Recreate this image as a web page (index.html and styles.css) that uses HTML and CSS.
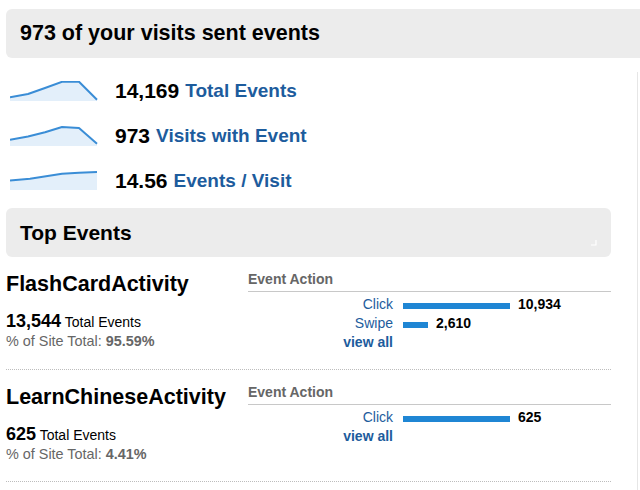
FILE: index.html
```html
<!DOCTYPE html>
<html>
<head>
<meta charset="utf-8">
<link rel="stylesheet" href="styles.css">
</head>
<body>
<div class="page">
  <div class="summary-bar">973 of your visits sent events</div>
  <div class="layout">
    <div class="main">
      <div class="metrics">
        <div class="metric">
          <svg class="spark" width="88" height="20" viewBox="0 0 88 20">
            <polygon points="0,16.2 18,13 35,7 52,0.8 69,0.8 87,18.8 87,20 0,20" fill="#e3effa"/>
            <polyline points="0,16.2 18,13 35,7 52,0.8 69,0.8 87,18.8" fill="none" stroke="#3a8dd6" stroke-width="2" stroke-linejoin="round"/>
          </svg>
          <span class="metric-value">14,169</span>
          <span class="metric-label">Total Events</span>
        </div>
        <div class="metric">
          <svg class="spark" width="88" height="20" viewBox="0 0 88 20">
            <polygon points="0,13.8 18,10.5 35,6.2 52,1 69,2 87,17.8 87,20 0,20" fill="#e3effa"/>
            <polyline points="0,13.8 18,10.5 35,6.2 52,1 69,2 87,17.8" fill="none" stroke="#3a8dd6" stroke-width="2" stroke-linejoin="round"/>
          </svg>
          <span class="metric-value">973</span>
          <span class="metric-label">Visits with Event</span>
        </div>
        <div class="metric">
          <svg class="spark" width="88" height="20" viewBox="0 0 88 20">
            <polygon points="0,9.5 20,7.8 52,2.8 69,1.8 87,1 87,19 0,19" fill="#e3effa"/>
            <polyline points="0,9.5 20,7.8 52,2.8 69,1.8 87,1" fill="none" stroke="#3a8dd6" stroke-width="2" stroke-linejoin="round"/>
          </svg>
          <span class="metric-value">14.56</span>
          <span class="metric-label">Events / Visit</span>
        </div>
      </div>

      <div class="section-bar">
        Top Events
        <svg class="grip" width="6" height="6" viewBox="0 0 6 6"><path d="M5 0 V5 H0" fill="none" stroke="#ffffff" stroke-width="1.2"/></svg>
      </div>

      <div class="event">
        <div class="event-left">
          <div class="event-name">FlashCardActivity</div>
          <div class="event-total"><b>13,544</b> Total Events</div>
          <div class="event-share">% of Site Total: <b>95.59%</b></div>
        </div>
        <div class="event-right">
          <div class="action-title">Event Action</div>
          <div class="action-row">
            <span class="action-label">Click</span>
            <span class="bar" style="width:107px"></span>
            <span class="action-value">10,934</span>
          </div>
          <div class="action-row">
            <span class="action-label">Swipe</span>
            <span class="bar" style="width:25px"></span>
            <span class="action-value">2,610</span>
          </div>
          <div class="action-row">
            <span class="action-label view-all">view all</span>
          </div>
        </div>
      </div>

      <div class="event">
        <div class="event-left">
          <div class="event-name">LearnChineseActivity</div>
          <div class="event-total"><b>625</b> Total Events</div>
          <div class="event-share">% of Site Total: <b>4.41%</b></div>
        </div>
        <div class="event-right">
          <div class="action-title">Event Action</div>
          <div class="action-row">
            <span class="action-label">Click</span>
            <span class="bar" style="width:107px"></span>
            <span class="action-value">625</span>
          </div>
          <div class="action-row">
            <span class="action-label view-all">view all</span>
          </div>
        </div>
      </div>
    </div>
    <div class="aside"></div>
  </div>
</div>
</body>
</html>
```

FILE: styles.css
```css
html, body {
  margin: 0;
  padding: 0;
  background: #ffffff;
  overflow: hidden;
}

body {
  font-family: "Liberation Sans", Arial, sans-serif;
  color: #000;
}

.page {
  padding: 9px 0 0 6px;
}

.summary-bar {
  height: 49px;
  line-height: 49px;
  background: #ececec;
  border-radius: 6px 0 0 6px;
  padding-left: 14px;
  font-size: 21.5px;
  font-weight: bold;
  white-space: nowrap;
}

.layout {
  display: flex;
  min-height: 440px;
}

.main {
  width: 605px;
  flex: none;
}

.aside {
  margin-left: 26px;
  margin-top: 14px;
  border-left: 1px solid #e6e6e6;
}

.metrics {
  margin-top: 10px;
}

.metric {
  height: 45px;
  display: flex;
  align-items: center;
  padding-left: 4px;
  white-space: nowrap;
}

.spark {
  flex: none;
  display: block;
  margin-right: 17px;
}

.metric-value {
  font-size: 21px;
  font-weight: bold;
  line-height: 45px;
}

.metric-label {
  font-size: 19px;
  font-weight: bold;
  color: #1d5c9d;
  margin-left: 6px;
  line-height: 45px;
}

.section-bar {
  position: relative;
  margin-top: 5px;
  height: 49px;
  line-height: 49px;
  background: #ececec;
  border-radius: 6px;
  padding-left: 14px;
  font-size: 21px;
  font-weight: bold;
}

.grip {
  position: absolute;
  right: 14px;
  bottom: 11px;
  display: block;
}

.event {
  display: flex;
  padding: 14px 0 17px;
  border-bottom: 1px dotted #bdbdbd;
}

.event-left {
  width: 242px;
  flex: none;
}

.event-name {
  font-size: 21.5px;
  font-weight: bold;
  line-height: 26px;
  white-space: nowrap;
}

.event-total {
  margin-top: 15px;
  font-size: 14px;
  line-height: 19px;
}

.event-total b {
  font-size: 18px;
}

.event-share {
  font-size: 14.4px;
  line-height: 19px;
  color: #666;
}

.event-right {
  flex: 1;
}

.action-title {
  font-size: 14px;
  font-weight: bold;
  color: #666;
  line-height: 17px;
  padding-bottom: 3px;
  border-bottom: 1px solid #c8c8c8;
  margin-bottom: 3px;
}

.action-row {
  display: flex;
  align-items: center;
  height: 19px;
  font-size: 14px;
  line-height: 19px;
}

.action-label {
  width: 145px;
  flex: none;
  text-align: right;
  color: #1d5c9d;
  margin-right: 10px;
}

.view-all {
  font-weight: bold;
}

.bar {
  display: block;
  height: 6px;
  background: #1f86d4;
  margin-top: 2px;
  flex: none;
}

.action-value {
  font-weight: bold;
  margin-left: 8px;
}
```
